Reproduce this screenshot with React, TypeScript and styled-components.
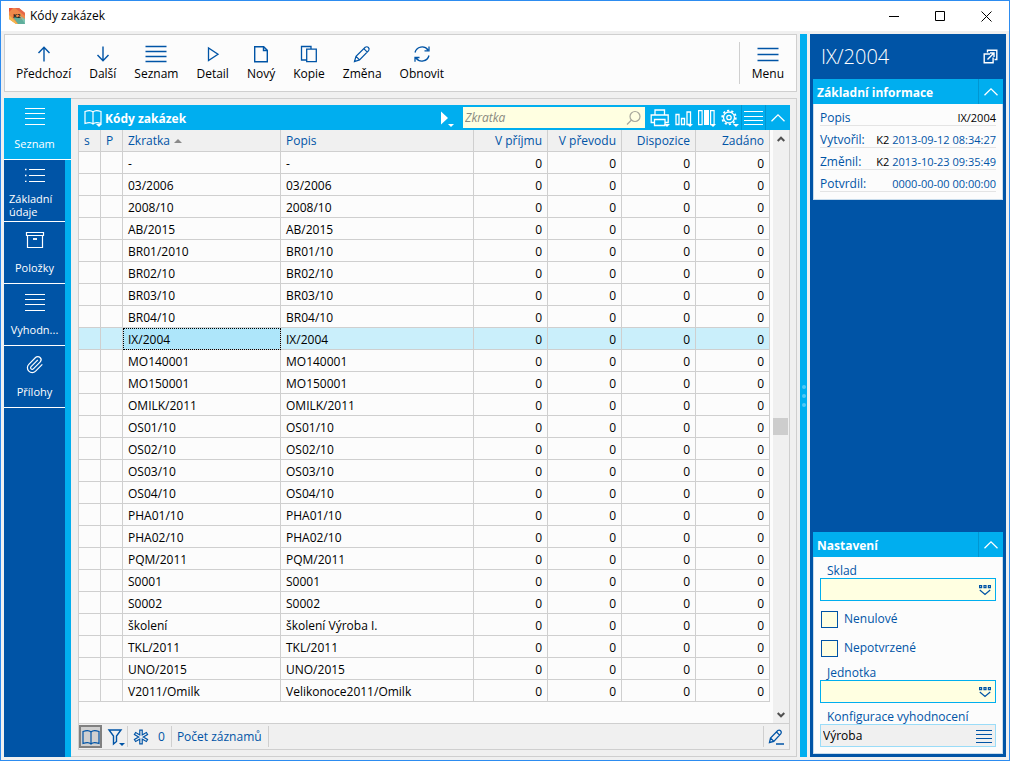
import React from "react";
import styled, { createGlobalStyle, css } from "styled-components";

const blue = "#0054a6";
const cyan = "#00aeef";
const face = "#f0f0f0";
const line = "#cfcfcf";
const paper = "#fcfcfc";
const cream = "#ffffe1";

const GlobalStyle = createGlobalStyle`
  *, *::before, *::after { box-sizing: border-box; }
  body {
    margin: 0;
    font: 12px/16px "Open Sans", "Noto Sans", sans-serif;
    color: #000;
  }
  button, input, select { font: inherit; color: inherit; }
  button { border: 0; padding: 0; background: none; }
`;

const Window = styled.div`
  min-height: 100vh;
  display: flex;
  flex-direction: column;
  border: 1px solid #2d8cf0;
  background: ${face};
`;

const TitleBar = styled.header`
  height: 30px;
  display: flex;
  align-items: center;
  gap: 5px;
  padding-left: 8px;
  background: #fff;
`;

const WindowTitle = styled.h1`
  flex: 1;
  margin: 0;
  font-size: 12px;
  font-weight: 400;
`;

const WindowButton = styled.button`
  width: 46px;
  height: 30px;
  display: grid;
  place-items: center;
`;

const WindowControls = styled.div`
  display: flex;
`;

const Main = styled.main`
  flex: 1;
  display: flex;
  gap: 3px;
  padding: 3px;
`;

const Workspace = styled.div`
  flex: 1;
  min-width: 0;
  display: flex;
  flex-direction: column;
  gap: 6px;
`;

const Toolbar = styled.nav`
  height: 58px;
  display: flex;
  align-items: center;
  padding-left: 2px;
  border: 1px solid ${line};
  background: ${paper};
`;

const ToolButton = styled.button`
  display: flex;
  flex-direction: column;
  align-items: center;
  gap: 2px;
  padding: 0 9px;
  white-space: nowrap;
  svg { color: ${blue}; }
`;

const MenuArea = styled.div`
  margin-left: auto;
  padding: 2px 3px;
  border-left: 1px solid ${line};
`;

const Content = styled.div`
  flex: 1;
  display: flex;
`;

const SideTabs = styled.nav`
  width: 67px;
  padding-right: 6px;
  display: flex;
  flex-direction: column;
  background: linear-gradient(${blue}, ${blue}) no-repeat 0 0 / 61px 100% ${cyan};
`;

const SideTab = styled.button<{ $active?: boolean }>`
  height: 62px;
  display: flex;
  flex-direction: column;
  align-items: center;
  justify-content: space-between;
  padding: 8px 0 3px;
  border-bottom: 1px solid #fff;
  background: ${(p) => (p.$active ? cyan : blue)};
  ${(p) => p.$active && css`margin-right: -6px; padding-right: 6px;`}
  color: #fff;
  font-size: 11px;
  line-height: 13px;
`;

const SideLabel = styled.span`
  height: 26px;
  display: flex;
  align-items: center;
  padding: 0 5px;
  text-align: left;
`;

const Frame = styled.div`
  flex: 1;
  min-width: 0;
  display: flex;
  padding: 6px 6px 6px 7px;
  border: solid ${line};
  border-width: 1px 1px 1px 0;
`;

const Grid = styled.section`
  flex: 1;
  min-width: 0;
  display: flex;
  flex-direction: column;
  border: solid ${line};
  border-width: 0 1px 1px;
`;

const GridBar = styled.div`
  height: 25px;
  display: flex;
  align-items: center;
  margin: 0 -1px;
  padding-left: 4px;
  background: ${cyan};
  color: #fff;
`;

const Heading = styled.h2`
  flex: 1;
  margin: 0;
  padding-top: 2px;
  font-size: 12px;
  font-weight: 700;
`;

const BarButton = styled.button<{ $w: number; $split?: boolean }>`
  width: ${(p) => p.$w}px;
  height: 25px;
  display: grid;
  place-items: center;
  color: #fff;
  ${(p) => p.$split && css`border-left: 1px solid #0096d2;`}
`;

const SearchBox = styled.label`
  width: 182px;
  height: 21px;
  display: flex;
  align-items: center;
  margin: 0 3px 0 7px;
  padding: 0 3px 0 2px;
  background: ${cream};
  color: #a8a89c;
`;

const SearchInput = styled.input`
  flex: 1;
  min-width: 0;
  padding: 0;
  border: 0;
  outline: 0;
  background: none;
  color: #000;
  &::placeholder { color: #8a8a80; font-style: italic; opacity: 1; }
`;

const GridBody = styled.div`
  flex: 1;
  display: flex;
  background: ${paper};
`;

const TableArea = styled.div`
  flex: 1;
  min-width: 0;
`;

const Table = styled.table`
  width: 100%;
  table-layout: fixed;
  border-collapse: separate;
  border-spacing: 0;
`;

const Col = styled.col<{ $w?: number }>`
  width: ${(p) => (p.$w ? p.$w + "px" : "auto")};
`;

const cell = css`
  height: 22px;
  padding: 0 5px;
  border: solid ${line};
  border-width: 0 1px 1px 0;
  overflow: hidden;
  white-space: nowrap;
`;

const HeadCell = styled.th<{ $num?: boolean }>`
  ${cell}
  background: ${face};
  color: ${blue};
  font-weight: 400;
  text-align: ${(p) => (p.$num ? "right" : "left")};
`;

const Cell = styled.td<{ $num?: boolean; $focus?: boolean }>`
  ${cell}
  padding-top: 2px;
  text-align: ${(p) => (p.$num ? "right" : "left")};
  ${(p) =>
    p.$focus &&
    css`
      background: #aee6fa;
      outline: 1px dotted #000;
      outline-offset: -1px;
    `}
`;

const Row = styled.tr<{ $current?: boolean }>`
  background: ${(p) => (p.$current ? "#caeffb" : paper)};
`;

const SortMark = styled.span`
  display: inline-block;
  margin-left: 4px;
  border: solid transparent;
  border-width: 0 4px 4px;
  border-bottom-color: #8a8a8a;
  vertical-align: 2px;
`;

const ScrollTrack = styled.div`
  width: 16px;
  margin-left: 3px;
  display: flex;
  flex-direction: column;
  background: ${face};
  color: #505050;
`;

const ScrollButton = styled.button`
  height: 17px;
  display: grid;
  place-items: center;
`;

const ScrollSpace = styled.div<{ $grow: number }>`
  flex: ${(p) => p.$grow};
`;

const ScrollThumb = styled.div`
  height: 17px;
  margin-right: 1px;
  background: #cdcdcd;
`;

const StatusBar = styled.footer`
  height: 26px;
  display: flex;
  align-items: center;
  border-top: 1px solid ${line};
  color: ${blue};
`;

const StatusButton = styled.button<{ $pressed?: boolean }>`
  height: 23px;
  min-width: 23px;
  display: flex;
  align-items: center;
  justify-content: center;
  gap: 9px;
  ${(p) => p.$pressed && css`border: 2px solid #808080; background: #d0d0d0;`}
`;

const StatusItem = styled.div<{ $end?: boolean; $tight?: boolean }>`
  height: 21px;
  display: flex;
  align-items: center;
  padding: ${(p) => (p.$tight ? "0 0 0 2px" : "0 6px 0 5px")};
  ${(p) =>
    p.$end
      ? css`margin-left: auto; padding: 0 4px; border-left: 1px solid ${line};`
      : css`border-right: 1px solid ${line};`}
`;

const Splitter = styled.div`
  width: 7px;
  display: flex;
  flex-direction: column;
  align-items: center;
  justify-content: center;
  gap: 5px;
  background: ${cyan};
`;

const Dot = styled.i`
  width: 4px;
  height: 4px;
  border-radius: 2px;
  background: #52c8f6;
`;

const Aside = styled.aside`
  width: 196px;
  display: flex;
  flex-direction: column;
  padding: 0 3px 3px;
  background: ${blue};
`;

const AsideHead = styled.div`
  height: 45px;
  display: flex;
  align-items: center;
  justify-content: space-between;
  padding: 0 5px 0 8px;
  color: #fff;
`;

const AsideTitle = styled.h2`
  margin: 0;
  font-size: 20px;
  font-weight: 300;
  line-height: 24px;
`;

const IconButton = styled.button`
  display: grid;
  place-items: center;
`;

const Card = styled.section<{ $bottom?: boolean }>`
  ${(p) => p.$bottom && css`margin-top: auto;`}
`;

const CardHead = styled.div`
  height: 25px;
  display: flex;
  align-items: center;
  padding-left: 4px;
  background: ${cyan};
  color: #fff;
`;

const Facts = styled.dl`
  margin: 0;
  padding: 0 6px 7px;
  border: 1px solid #c8dcec;
  border-top: 0;
  background: ${paper};
  color: ${blue};
`;

const Fact = styled.div`
  height: 22px;
  display: flex;
  align-items: center;
  justify-content: space-between;
  padding-top: 6px;
  border-bottom: 1px solid #e4e4e4;
  white-space: nowrap;
  dd { margin: 0; }
`;

const FactValue = styled.dd`
  font-size: 11px;
`;

const Ink = styled.span`
  color: #000;
`;

const Form = styled.form`
  display: flex;
  flex-direction: column;
  padding: 7px 6px 6px;
  border: 1px solid #c8dcec;
  border-top: 0;
  background: ${paper};
  color: ${blue};
`;

const FieldLabel = styled.label`
  padding-left: 7px;
  line-height: 14px;
`;

const Field = styled.div<{ $plain?: boolean }>`
  height: 23px;
  display: flex;
  align-items: center;
  padding: 0 ${(p) => (p.$plain ? 3 : 4)}px 0 2px;
  border: 1px solid ${(p) => (p.$plain ? "#9adcf8" : cyan)};
  background: ${(p) => (p.$plain ? face : cream)};
`;

const Select = styled.select`
  flex: 1;
  min-width: 0;
  height: 21px;
  padding: 0;
  border: 0;
  appearance: none;
  background: none;
`;

const TextInput = styled.input`
  flex: 1;
  min-width: 0;
  padding: 0;
  border: 0;
  background: none;
  color: #000;
`;

const Checks = styled.div`
  display: flex;
  flex-direction: column;
  gap: 11px;
  padding: 9px 1px;
`;

const CheckLabel = styled.label`
  height: 18px;
  display: flex;
  align-items: center;
  gap: 6px;
`;

const CheckBox = styled.input`
  width: 17px;
  height: 17px;
  margin: 0;
  appearance: none;
  border: 1px solid ${blue};
  background: ${cream};
  &:checked { background: ${blue}; }
`;

const Gap = styled.div`
  height: 7px;
`;

type IconProps = { w: number; h: number; sw?: number; children: React.ReactNode };
const Icon = ({ w, h, sw = 1, children }: IconProps) => (
  <svg width={w} height={h} viewBox={`0 0 ${w} ${h}`} fill="none" stroke="currentColor" strokeWidth={sw} aria-hidden="true">
    {children}
  </svg>
);

const DropMark = ({ x, y }: { x: number; y: number }) => (
  <path d={`M${x} ${y}h6l-3 3z`} fill="currentColor" stroke="none" />
);

const ArrowUp = () => <Icon w={22} h={20} sw={1.4}><path d="M11 17.500V3.500M5.500 9 11 3.200 16.500 9" /></Icon>;
const ArrowDown = () => <Icon w={22} h={20} sw={1.4}><path d="M11 2.500v14M5.500 11 11 16.800 16.500 11" /></Icon>;
const ListLines = () => <Icon w={22} h={20} sw={1.3}><path d="M.5 2.500h21M.5 7.500h21M.5 12.500h21M.5 17.500h21" /></Icon>;
const MenuLines = () => <Icon w={22} h={20} sw={1.4}><path d="M.5 4.500h21M.5 10.500h21M.5 16.500h21" /></Icon>;
const Play = () => <Icon w={22} h={20} sw={1.3}><path d="M6.500 4v12.500l9.500-6.250z" /></Icon>;
const Page = () => <Icon w={22} h={20} sw={1.4}><path d="M4.700 2.700h9l3.600 3.600v11.500H4.700zM13.500 2.700v3.800h3.800" /></Icon>;
const Copy = () => <Icon w={22} h={20} sw={1.3}><path d="M8.500 16H3.500V2.500H13V5M8.700 5.200h9.600v12.500H8.700z" /></Icon>;
const Pencil = () => (
  <Icon w={22} h={20} sw={1.2}>
    <path d="m3.500 17.500 1.500-5.200L14.200 3.300q1.800-1.200 3.200.2t.2 3.200L8.500 15.900zM5 12.300l3.500 3.600M12.800 4.700l3.500 3.500" />
  </Icon>
);
const Refresh = () => (
  <Icon w={22} h={20} sw={1.3}>
    <path d="M4 8.500a7.300 7.300 0 0 1 13-2.500M18 2.500v4.300h-4.500M18 11.500a7.300 7.300 0 0 1-13 2.500M4 17.800v-4.300h4.500" />
  </Icon>
);

const SideLines = () => <Icon w={20} h={20}><path d="M0 2.500h20M0 7.500h20M0 12.500h20M0 18.500h20" /></Icon>;
const SideList = () => (
  <Icon w={20} h={14}><path d="M4 1.500h16M4 7.500h16M4 13.500h16" /><path d="M0 1.500h1.500M0 7.500h1.500M0 13.500h1.500" strokeWidth={1.6} /></Icon>
);
const SideBox = () => (
  <Icon w={20} h={20} sw={1.2}><path d="M1.500 2.500h17v3h-17zM2.500 5.500h15v12h-15z" /><path d="M8 9h4" strokeWidth={1.8} /></Icon>
);
const SideClip = () => (
  <Icon w={20} h={20} sw={1.5}>
    <path
      transform="translate(0 1) scale(.8)"
      d="m16 6-8.414 8.586a2 2 0 0 0 2.829 2.829l8.414-8.586a4 4 0 1 0-5.657-5.657l-8.379 8.551a6 6 0 1 0 8.485 8.485l8.379-8.551"
    />
  </Icon>
);

const Book = () => (
  <path d="M9 4C7.500 2.500 4 2.500 1 3.500v12c3-1 6.500-1 8 .5 1.500-1.500 5-1.500 8-.5v-12c-3-1-6.500-1-8 .5zM9 4v12" />
);
const BookDrop = () => <Icon w={20} h={20} sw={1.2}><Book /><DropMark x={12} y={16} /></Icon>;
const GoDrop = () => (
  <Icon w={16} h={20}><path d="M2 3.500v13l7-6.500z" fill="currentColor" stroke="none" /><DropMark x={9} y={16} /></Icon>
);
const Magnifier = () => <Icon w={16} h={16} sw={1.2}><circle cx="9" cy="6.500" r="5" /><path d="m5.500 10-4.500 4.500" /></Icon>;
const Printer = () => (
  <Icon w={20} h={20} sw={1.3}>
    <path d="M5 7V2h9.500v5M4.500 14.500H1.200V7h17v7.500H15M4.500 11.500h10.500v6H4.500z" /><DropMark x={14} y={16} />
  </Icon>
);
const Chart = () => (
  <Icon w={20} h={20} sw={1.3}><path d="M2 6.500h3v10H2zM7.500 10.500h3v6h-3zM13 4h3.500v12.500H13z" /><DropMark x={13} y={16} /></Icon>
);
const Columns = () => (
  <Icon w={20} h={20} sw={1.2}>
    <path d="M1.600 2.600h3.500v14H1.600zM13.600 2.600h3.500v14h-3.500z" /><path d="M7 2h5v15H7z" fill="currentColor" stroke="none" /><DropMark x={13} y={16} />
  </Icon>
);
const Gear = () => (
  <Icon w={20} h={20} sw={1.3}>
    <circle cx="9" cy="9.500" r="5.500" /><circle cx="9" cy="9.500" r="2.200" />
    <circle cx="9" cy="9.500" r="6.800" strokeWidth={1.8} strokeDasharray="2.200 2.070" /><DropMark x={13} y={16} />
  </Icon>
);
const BarLines = () => <Icon w={19} h={20}><path d="M0 3.500h19M0 8.500h19M0 12.500h19M0 16.500h19" /></Icon>;
const ChevronUp = () => <Icon w={14} h={10} sw={1.3}><path d="M.5 8.200 7 1.800l6.500 6.400" /></Icon>;
const ScrollUp = () => <Icon w={8} h={6} sw={2}><path d="M.7 5 4 1.700 7.300 5" /></Icon>;
const ScrollDown = () => <Icon w={8} h={6} sw={2}><path d="M.7 1 4 4.300 7.300 1" /></Icon>;
const Funnel = () => (
  <Icon w={18} h={20} sw={1.4}><path d="M2 3h12L9.500 9v5.500L6.500 17V9z" /><DropMark x={12} y={16} /></Icon>
);
const Asterisk = () => (
  <Icon w={16} h={18} sw={3.6}>
    <path d="M8 1.500v15M1.500 5.200l13 7.600M14.500 5.200l-13 7.600" />
    <path d="M8 2.700v12.600M2.500 5.800l11 6.400M13.500 5.800l-11 6.400" stroke={face} strokeWidth={1.3} />
  </Icon>
);
const EditLine = () => (
  <Icon w={17} h={18} sw={1.3}>
    <path d="m1.500 14.500 1-4.500 7.300-7.500q1.500-1 2.800.3t.3 2.900L5.800 13.400zM2.500 10l3.300 3.400M8.500 4l3.100 3.100M8 16h8" />
  </Icon>
);
const PopOut = () => (
  <Icon w={15} h={15} sw={1.4}>
    <path d="M4.500 3.500V1.200h9.300v9.300H11.500M7 5H1.200v8.800h8.900V8.500M4.500 10.500l6.200-6.200M7 4h4v4" />
  </Icon>
);
const DotsDown = () => (
  <Icon w={12} h={12} sw={1.2}><path d="M.6 1.600h2v2h-2zM5 1.600h2v2H5zM9.400 1.600h2v2h-2zM.8 6 6 10.500 11.200 6" /></Icon>
);
const FieldLines = () => <Icon w={16} h={14}><path d="M0 1.500h16M0 5.500h16M0 9.500h16M0 13.500h16" /></Icon>;

const Logo = () => (
  <svg width="16" height="16" viewBox="0 0 16 16" role="img" aria-label="K2">
    <path d="M0 0h10l6 5v11H7l-7-5z" fill="#f0894a" />
    <path d="M0 0h4l-4 4z" fill="#e8503a" />
    <path d="M6 0h4l6 5v3z" fill="#e5674a" />
    <path d="M0 7l9 9H7l-7-5z" fill="#f6b84c" />
    <path d="M4 9h6l6 5v2H9z" fill="#5fae9c" />
    <path d="M11 8l5 3v5z" fill="#7cc4b0" />
    <text x="4" y="10" fontSize="6" fontWeight="700" fontFamily="Open Sans, sans-serif" fill="#1c1c1c">K2</text>
  </svg>
);

const tools = [
  { label: "Předchozí", icon: <ArrowUp /> },
  { label: "Další", icon: <ArrowDown /> },
  { label: "Seznam", icon: <ListLines /> },
  { label: "Detail", icon: <Play /> },
  { label: "Nový", icon: <Page /> },
  { label: "Kopie", icon: <Copy /> },
  { label: "Změna", icon: <Pencil /> },
  { label: "Obnovit", icon: <Refresh /> },
];

const tabs = [
  { label: "Seznam", icon: <SideLines />, active: true },
  { label: "Základní údaje", icon: <SideList /> },
  { label: "Položky", icon: <SideBox /> },
  { label: "Vyhodn...", icon: <SideLines /> },
  { label: "Přílohy", icon: <SideClip /> },
];

const orders: [string, string][] = [
  ["-", "-"],
  ["03/2006", "03/2006"],
  ["2008/10", "2008/10"],
  ["AB/2015", "AB/2015"],
  ["BR01/2010", "BR01/10"],
  ["BR02/10", "BR02/10"],
  ["BR03/10", "BR03/10"],
  ["BR04/10", "BR04/10"],
  ["IX/2004", "IX/2004"],
  ["MO140001", "MO140001"],
  ["MO150001", "MO150001"],
  ["OMILK/2011", "OMILK/2011"],
  ["OS01/10", "OS01/10"],
  ["OS02/10", "OS02/10"],
  ["OS03/10", "OS03/10"],
  ["OS04/10", "OS04/10"],
  ["PHA01/10", "PHA01/10"],
  ["PHA02/10", "PHA02/10"],
  ["PQM/2011", "PQM/2011"],
  ["S0001", "S0001"],
  ["S0002", "S0002"],
  ["školení", "školení Výroba I."],
  ["TKL/2011", "TKL/2011"],
  ["UNO/2015", "UNO/2015"],
  ["V2011/Omilk", "Velikonoce2011/Omilk"],
];

const amounts = ["V příjmu", "V převodu", "Dispozice", "Zadáno"];

export default function App() {
  const current = "IX/2004";
  return (
    <Window>
      <GlobalStyle />
      <TitleBar>
        <Logo />
        <WindowTitle>Kódy zakázek</WindowTitle>
        <WindowControls>
          <WindowButton aria-label="Minimalizovat"><Icon w={11} h={11}><path d="M0 5.500h10" /></Icon></WindowButton>
          <WindowButton aria-label="Maximalizovat"><Icon w={11} h={11}><path d="M.5.5h9v9h-9z" /></Icon></WindowButton>
          <WindowButton aria-label="Zavřít"><Icon w={11} h={11}><path d="m.5.5 10 10m0-10-10 10" /></Icon></WindowButton>
        </WindowControls>
      </TitleBar>
      <Main>
        <Workspace>
          <Toolbar>
            {tools.map((t) => (
              <ToolButton key={t.label}>{t.icon}{t.label}</ToolButton>
            ))}
            <MenuArea><ToolButton><MenuLines />Menu</ToolButton></MenuArea>
          </Toolbar>
          <Content>
            <SideTabs>
              {tabs.map((t) => (
                <SideTab key={t.label} $active={t.active}>{t.icon}<SideLabel>{t.label}</SideLabel></SideTab>
              ))}
            </SideTabs>
            <Frame>
              <Grid>
                <GridBar>
                  <BarButton $w={23} aria-label="Kniha"><BookDrop /></BarButton>
                  <Heading>Kódy zakázek</Heading>
                  <BarButton $w={18} aria-label="Přejít"><GoDrop /></BarButton>
                  <SearchBox>
                    <SearchInput type="text" placeholder="Zkratka" aria-label="Zkratka" />
                    <Magnifier />
                  </SearchBox>
                  <BarButton $w={24} aria-label="Tisk"><Printer /></BarButton>
                  <BarButton $w={24} aria-label="Graf"><Chart /></BarButton>
                  <BarButton $w={22} aria-label="Sloupce"><Columns /></BarButton>
                  <BarButton $w={23} aria-label="Nastavení"><Gear /></BarButton>
                  <BarButton $w={24} $split aria-label="Nabídka"><BarLines /></BarButton>
                  <BarButton $w={25} $split aria-label="Sbalit"><ChevronUp /></BarButton>
                </GridBar>
                <GridBody>
                  <TableArea>
                    <Table>
                      <colgroup>
                        <Col $w={22} /><Col $w={22} /><Col $w={158} /><Col />
                        {amounts.map((a) => <Col key={a} $w={74} />)}
                      </colgroup>
                      <thead>
                        <tr>
                          <HeadCell>s</HeadCell>
                          <HeadCell>P</HeadCell>
                          <HeadCell>Zkratka<SortMark /></HeadCell>
                          <HeadCell>Popis</HeadCell>
                          {amounts.map((a) => <HeadCell key={a} $num>{a}</HeadCell>)}
                        </tr>
                      </thead>
                      <tbody>
                        {orders.map(([code, text]) => (
                          <Row key={code} $current={code === current}>
                            <Cell /><Cell />
                            <Cell $focus={code === current}>{code}</Cell>
                            <Cell>{text}</Cell>
                            {amounts.map((a) => <Cell key={a} $num>0</Cell>)}
                          </Row>
                        ))}
                      </tbody>
                    </Table>
                  </TableArea>
                  <ScrollTrack>
                    <ScrollButton aria-label="Nahoru"><ScrollUp /></ScrollButton>
                    <ScrollSpace $grow={50} />
                    <ScrollThumb />
                    <ScrollSpace $grow={50} />
                    <ScrollButton aria-label="Dolů"><ScrollDown /></ScrollButton>
                  </ScrollTrack>
                </GridBody>
                <StatusBar>
                  <StatusButton $pressed aria-label="Kniha"><Icon w={18} h={18} sw={1.2}><Book /></Icon></StatusButton>
                  <StatusItem $tight>
                    <StatusButton aria-label="Filtr"><Funnel /></StatusButton>
                  </StatusItem>
                  <StatusItem>
                    <StatusButton><Asterisk />0</StatusButton>
                  </StatusItem>
                  <StatusItem>Počet záznamů</StatusItem>
                  <StatusItem $end><IconButton aria-label="Upravit"><EditLine /></IconButton></StatusItem>
                </StatusBar>
              </Grid>
            </Frame>
          </Content>
        </Workspace>
        <Splitter><Dot /><Dot /><Dot /></Splitter>
        <Aside>
          <AsideHead>
            <AsideTitle>IX/2004</AsideTitle>
            <IconButton aria-label="Otevřít v okně"><PopOut /></IconButton>
          </AsideHead>
          <Card>
            <CardHead>
              <Heading>Základní informace</Heading>
              <BarButton $w={25} $split aria-label="Sbalit"><ChevronUp /></BarButton>
            </CardHead>
            <Facts>
              <Fact><dt>Popis</dt><FactValue><Ink>IX/2004</Ink></FactValue></Fact>
              <Fact><dt>Vytvořil:</dt><FactValue><Ink>K2</Ink> 2013-09-12 08:34:27</FactValue></Fact>
              <Fact><dt>Změnil:</dt><FactValue><Ink>K2</Ink> 2013-10-23 09:35:49</FactValue></Fact>
              <Fact><dt>Potvrdil:</dt><FactValue>0000-00-00 00:00:00</FactValue></Fact>
            </Facts>
          </Card>
          <Card $bottom>
            <CardHead>
              <Heading>Nastavení</Heading>
              <BarButton $w={25} $split aria-label="Sbalit"><ChevronUp /></BarButton>
            </CardHead>
            <Form>
              <FieldLabel htmlFor="store">Sklad</FieldLabel>
              <Field><Select id="store"><option value="" /></Select><DotsDown /></Field>
              <Checks>
                <CheckLabel><CheckBox type="checkbox" />Nenulové</CheckLabel>
                <CheckLabel><CheckBox type="checkbox" />Nepotvrzené</CheckLabel>
              </Checks>
              <FieldLabel htmlFor="unit">Jednotka</FieldLabel>
              <Field><Select id="unit"><option value="" /></Select><DotsDown /></Field>
              <Gap />
              <FieldLabel htmlFor="config">Konfigurace vyhodnocení</FieldLabel>
              <Field $plain>
                <TextInput id="config" type="text" defaultValue="Výroba" />
                <IconButton type="button" aria-label="Vybrat konfiguraci"><FieldLines /></IconButton>
              </Field>
            </Form>
          </Card>
        </Aside>
      </Main>
    </Window>
  );
}
